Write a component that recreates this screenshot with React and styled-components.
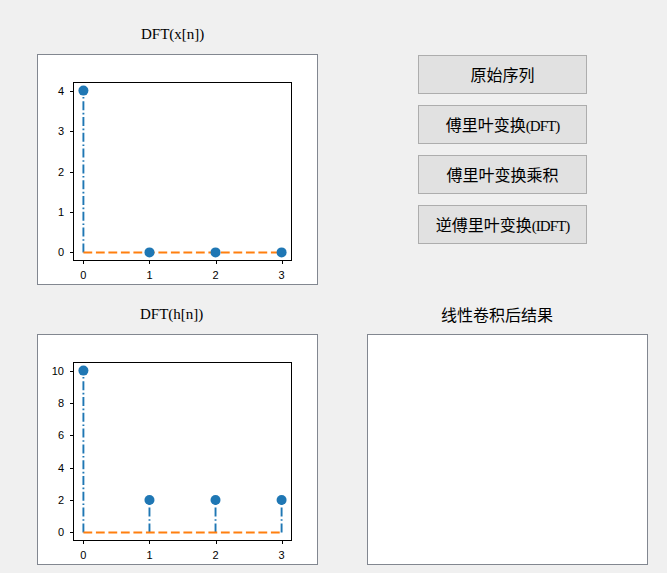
import React from "react";
import styled, { createGlobalStyle } from "styled-components";

const GlobalStyle = createGlobalStyle`
  html, body {
    margin: 0;
    padding: 0;
    background: #f0f0f0;
  }
  body {
    font-family: "Liberation Serif", "Noto Sans CJK SC", serif;
    color: #000;
  }
`;

const Page = styled.div`
  width: 667px;
  height: 573px;
  box-sizing: border-box;
  padding: 24px 0 0 37px;
  display: grid;
  grid-template-columns: 281px 281px;
  grid-template-rows: 261px 261px;
  column-gap: 49px;
  row-gap: 19px;
  overflow: hidden;
`;

const Cell = styled.div`
  display: flex;
  flex-direction: column;
`;

const Title = styled.div`
  height: 20px;
  line-height: 20px;
  margin-bottom: 10px;
  padding-left: ${(p) => p.$offset}px;
  white-space: nowrap;
  font-size: ${(p) => (p.$cjk ? 16 : 15)}px;
  font-family: ${(p) =>
    p.$cjk
      ? `"Noto Sans CJK SC", sans-serif`
      : `"Liberation Serif", "Noto Sans CJK SC", serif`};
`;

const Frame = styled.div`
  width: 281px;
  height: 231px;
  box-sizing: border-box;
  border: 1px solid #828790;
  background: #fff;
  display: flex;
`;

const ButtonStack = styled.div`
  display: flex;
  flex-direction: column;
  gap: 11px;
  padding: 31px 0 0 51px;
`;

const Button = styled.button`
  display: block;
  width: 169px;
  height: 39px;
  box-sizing: border-box;
  margin: 0;
  padding: 0;
  border: 1px solid #adadad;
  background: #e1e1e1;
  text-align: center;
  line-height: 37px;
  color: #000;
  white-space: nowrap;
`;

const Cjk = styled.span`
  font-family: "Noto Sans CJK SC", sans-serif;
  font-size: 16px;
  line-height: 37px;
`;

const Latin = styled.span`
  font-family: "Liberation Serif", serif;
  font-size: 15px;
  letter-spacing: -1px;
  line-height: 37px;
`;

const AX_L = 35.5;
const AX_R = 253.5;
const AX_T = 27.5;
const AX_B = 205.5;
const BLUE = "#1f77b4";
const ORANGE = "#ff7f0e";

function StemPlot({ data, yMax, yTicks }) {
  const margin = yMax * 0.05;
  const yMin = -margin;
  const yTop = yMax + margin;
  const xMin = -0.15;
  const xMaxR = 3.15;
  const px = (x) => AX_L + ((x - xMin) / (xMaxR - xMin)) * (AX_R - AX_L);
  const py = (y) => AX_B - ((y - yMin) / (yTop - yMin)) * (AX_B - AX_T);
  const y0 = py(0);
  return (
    <svg width="279" height="229" viewBox="0 0 279 229">
      <rect
        x={AX_L}
        y={AX_T}
        width={AX_R - AX_L}
        height={AX_B - AX_T}
        fill="#fff"
        stroke="#000"
        strokeWidth="1"
      />
      {data.map((v, i) => (
        <line
          key={"s" + i}
          x1={px(i)}
          x2={px(i)}
          y1={y0}
          y2={py(v)}
          stroke={BLUE}
          strokeWidth="1.9"
          strokeDasharray="9 2.6 1.6 2.6"
        />
      ))}
      <line
        x1={px(0)}
        x2={px(3)}
        y1={y0}
        y2={y0}
        stroke={ORANGE}
        strokeWidth="2"
        strokeDasharray="8.8 3.7"
      />
      {data.map((v, i) => (
        <circle key={"m" + i} cx={px(i)} cy={py(v)} r="5" fill={BLUE} />
      ))}
      {[0, 1, 2, 3].map((t) => (
        <g key={"xt" + t}>
          <line
            x1={Math.round(px(t)) + 0.5}
            x2={Math.round(px(t)) + 0.5}
            y1={AX_B}
            y2={AX_B + 3.5}
            stroke="#000"
            strokeWidth="1"
          />
          <text
            x={px(t)}
            y={AX_B + 18.8}
            textAnchor="middle"
            fontFamily="Liberation Sans, Arial, sans-serif"
            fontSize="11"
            fill="#000"
          >
            {t}
          </text>
        </g>
      ))}
      {yTicks.map((t) => (
        <g key={"yt" + t}>
          <line
            x1={AX_L - 3.5}
            x2={AX_L}
            y1={Math.round(py(t)) + 0.5}
            y2={Math.round(py(t)) + 0.5}
            stroke="#000"
            strokeWidth="1"
          />
          <text
            x={AX_L - 9.5}
            y={py(t) + 4}
            textAnchor="end"
            fontFamily="Liberation Sans, Arial, sans-serif"
            fontSize="11"
            fill="#000"
          >
            {t}
          </text>
        </g>
      ))}
    </svg>
  );
}

const buttons = [
  [["c", "原始序列"]],
  [["c", "傅里叶变换"], ["l", "(DFT)"]],
  [["c", "傅里叶变换乘积"]],
  [["c", "逆傅里叶变换"], ["l", "(IDFT)"]],
];

export default function App() {
  return (
    <>
      <GlobalStyle />
      <Page>
        <Cell>
          <Title $offset={104}>DFT(x[n])</Title>
          <Frame>
            <StemPlot data={[4, 0, 0, 0]} yMax={4} yTicks={[0, 1, 2, 3, 4]} />
          </Frame>
        </Cell>
        <ButtonStack>
          {buttons.map((parts, i) => (
            <Button key={i}>
              {parts.map(([k, t], j) =>
                k === "c" ? <Cjk key={j}>{t}</Cjk> : <Latin key={j}>{t}</Latin>
              )}
            </Button>
          ))}
        </ButtonStack>
        <Cell>
          <Title $offset={103}>DFT(h[n])</Title>
          <Frame>
            <StemPlot
              data={[10, 2, 2, 2]}
              yMax={10}
              yTicks={[0, 2, 4, 6, 8, 10]}
            />
          </Frame>
        </Cell>
        <Cell>
          <Title $offset={74} $cjk>
            线性卷积后结果
          </Title>
          <Frame />
        </Cell>
      </Page>
    </>
  );
}
